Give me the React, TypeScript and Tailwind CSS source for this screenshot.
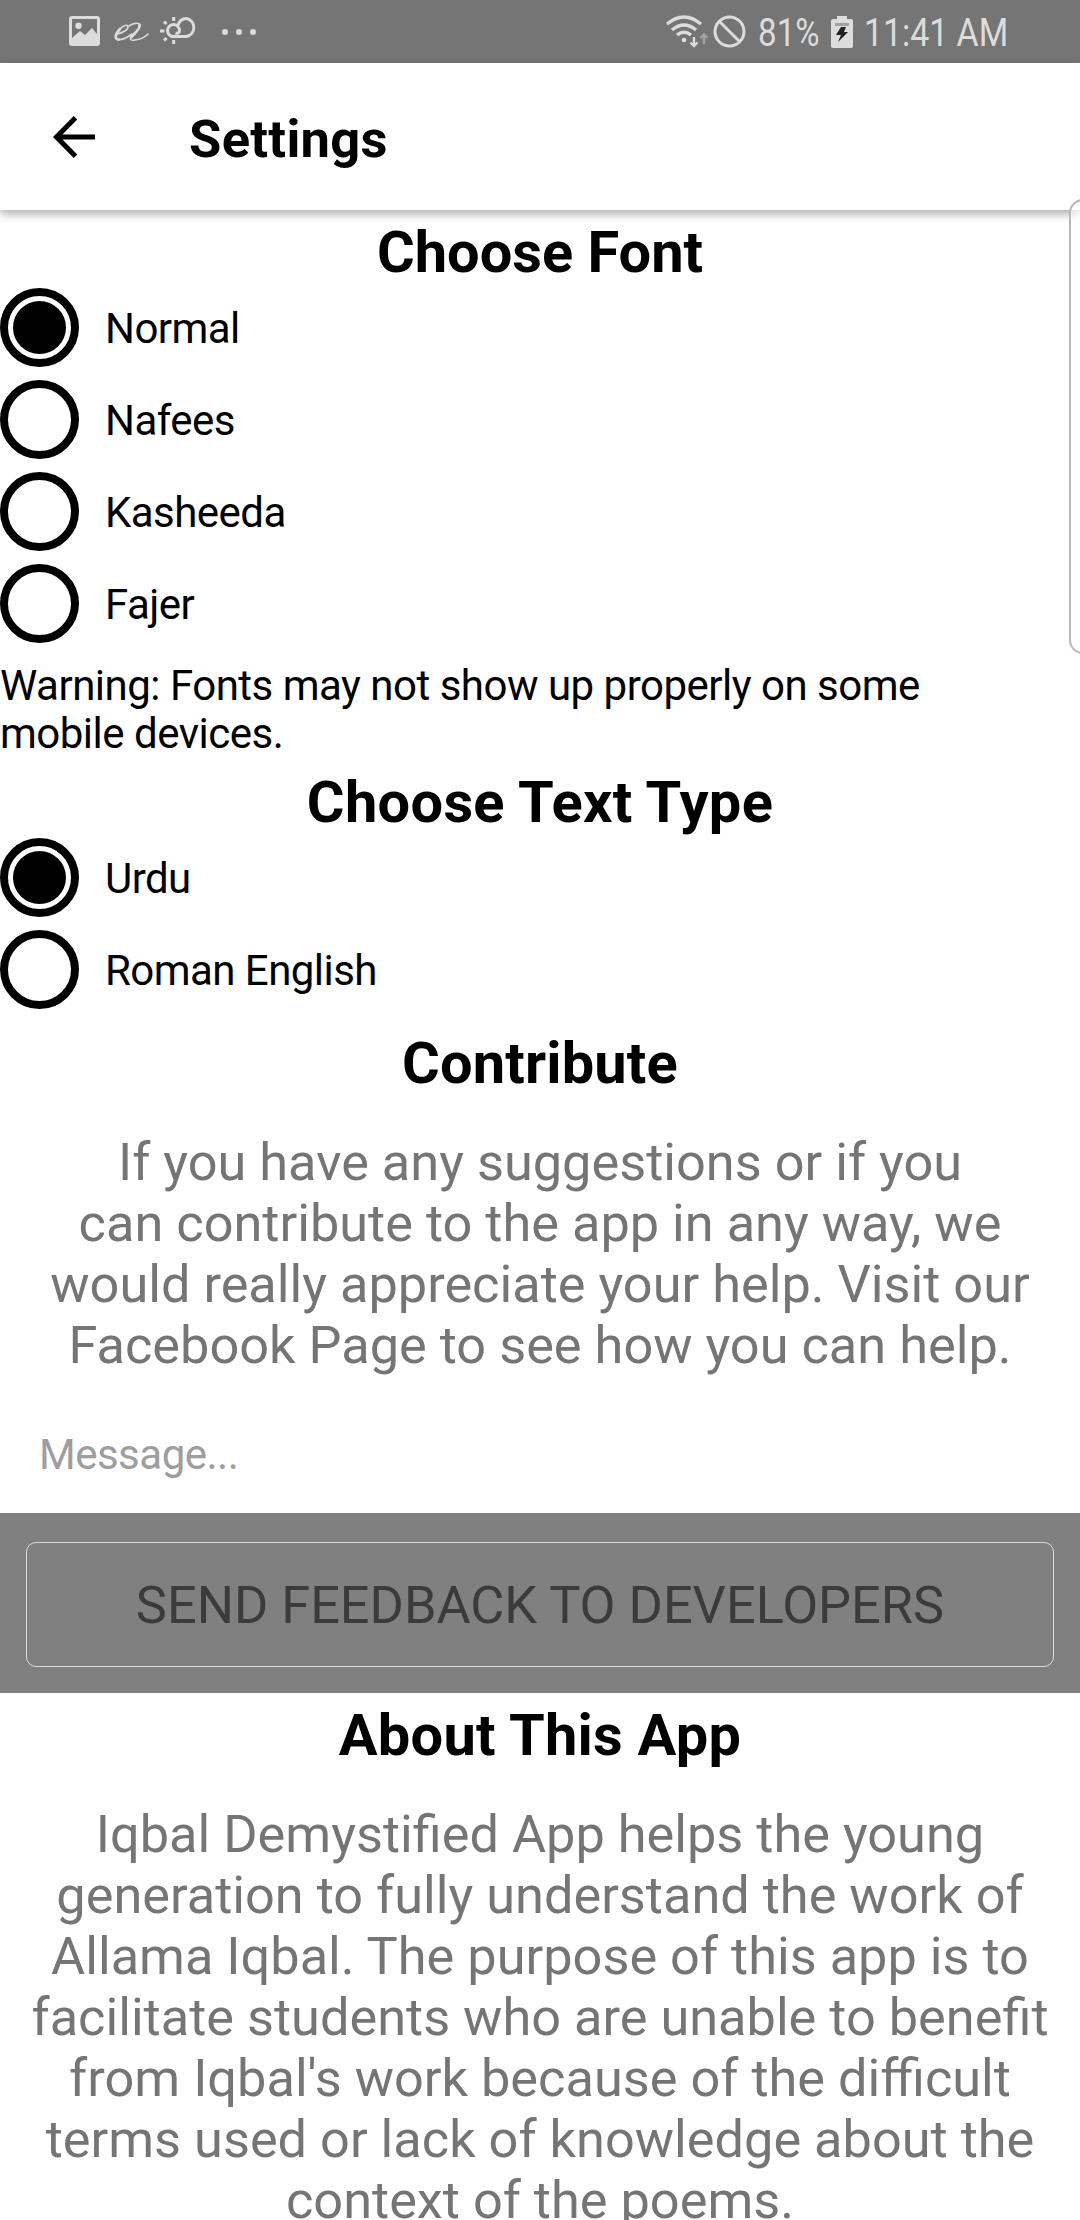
import type { ReactNode } from "react";

function StatusBar() {
  return (
    <div className="flex h-[63px] items-center bg-[#757575] text-[#dcdcdc]">
      <svg className="ml-[69px] h-[31px] w-[31px] shrink-0" viewBox="0 0 31 31">
        <path fill="currentColor" fillRule="evenodd" d="M3 0H28Q31 0 31 3V27Q31 30 28 30H3Q0 30 0 27V3Q0 0 3 0ZM3 3V22L11 15L16 19L23 12L28 18V3ZM9.500 6.500A3.200 3.200 0 1 1 9.500 12.900A3.200 3.200 0 1 1 9.500 6.500Z" />
      </svg>
      <svg className="ml-[14px] h-[20px] w-[36px] shrink-0" viewBox="0 0 36 20" fill="none" stroke="currentColor" strokeLinecap="round">
        <path strokeWidth="1.600" d="M3 12C8 11 14 8 14 5C14 2 9 3 5 8" />
        <path strokeWidth="2.600" d="M6 7C1 12 0 17.500 5 17.500" />
        <path strokeWidth="1.600" d="M4 17.800C9 18 14 15 18 12M15 4C19 1 24 0.500 26 2.500" />
        <path strokeWidth="2.800" d="M25.500 3C27 6 20 12 17.500 15" />
        <path strokeWidth="1.600" d="M17 15.500C15 18 18 18.500 21 18C26 17.500 31 15 34 12" />
      </svg>
      <svg className="ml-[10px] h-[30px] w-[37px] shrink-0" viewBox="0 0 37 30" fill="none" stroke="currentColor" strokeWidth="3">
        <path d="M17.500 9.500C19 4 22.500 1.500 26.500 1.500A9.200 9.200 0 0 1 26.500 19.500H14A6 6 0 1 1 19.500 13.500C19.500 15.500 18 17 15.500 16" />
        <path d="M13.700 0V4M4 4.500L6.500 7M0 14H4.500M4 23.500L6.500 21M13.700 23V27" />
      </svg>
      <div className="ml-[25px] flex gap-2">
        <i className="size-1.5 rounded-full bg-current" />
        <i className="size-1.5 rounded-full bg-current" />
        <i className="size-1.5 rounded-full bg-current" />
      </div>
      <div className="grow" />
      <svg className="h-[34px] w-[43px] shrink-0" viewBox="0 0 43 34" fill="none" stroke="currentColor" strokeWidth="3.200">
        <path d="M1 9Q18-5 35 9M6 15Q18 5 30 15M11 20Q18 14.500 25 20" />
        <circle cx="18" cy="25" r="2.300" fill="currentColor" stroke="none" />
        <path strokeWidth="2.400" d="M28 22V31M24.500 27.500L28 31L31.500 27.500" />
        <path className="text-[#a2a2a2]" strokeWidth="2.400" d="M38 29V20M34.500 23L38 19.500L41.500 23" />
      </svg>
      <svg className="ml-[4px] h-[33px] w-[33px] shrink-0" viewBox="0 0 33 33" fill="none" stroke="currentColor" strokeWidth="3">
        <circle cx="16.500" cy="16.500" r="14.500" />
        <path d="M6.500 6.500L26.500 26.500" />
      </svg>
      <span className="ml-[12px] w-[61px] origin-left scale-x-[0.85] pt-[2px] text-[39px] leading-[46px] whitespace-nowrap">81%</span>
      <svg className="ml-[12px] h-[32px] w-[22px] shrink-0" viewBox="0 0 22 32">
        <path fill="currentColor" d="M6 0H16V3H20Q22 3 22 5V30Q22 32 20 32H2Q0 32 0 30V5Q0 3 2 3H6Z" />
        <path fill="#a0a0a0" d="M4 7H18V10H4Z" />
        <path fill="#222" d="M10 11H15L13 16H17L7 26L10 19H5Z" />
      </svg>
      <span className="mr-[72px] ml-[11px] w-[144px] origin-left scale-x-[0.867] pt-[2px] text-[39px] leading-[46px] whitespace-nowrap">11:41 AM</span>
    </div>
  );
}

function Header() {
  return (
    <header className="relative flex h-[147px] items-center bg-white shadow-[0_4px_9px_rgba(0,0,0,0.32)]">
      <svg className="ml-[53px] h-[42px] w-[42px]" viewBox="0 0 42 42" fill="none" stroke="#000" strokeWidth="5">
        <path d="M42 21H3.500M22.500 1.800L3.500 21L22.500 40.200" />
      </svg>
      <h1 className="ml-[94px] pt-1 text-[52.500px] leading-[62px] font-bold tracking-[0.3px]">Settings</h1>
    </header>
  );
}

function Heading({ children, spacing = "" }: { children: ReactNode; spacing?: string }) {
  return <h2 className={`text-center text-[57.750px] leading-[68px] font-bold ${spacing}`}>{children}</h2>;
}

function Radio({ label, selected = false }: { label: string; selected?: boolean }) {
  return (
    <label className="flex h-[92px] items-start">
      <span className="flex size-[79px] items-center justify-center rounded-full border-8 border-black">
        {selected && <span className="size-[53px] rounded-full bg-black" />}
      </span>
      <span className="ml-[26px] pt-[16px] text-[42px] leading-[50px] tracking-[-0.55px]">{label}</span>
    </label>
  );
}

function Line({ children }: { children: ReactNode }) {
  return <span className="block whitespace-nowrap">{children}</span>;
}

export default function App() {
  return (
    <div className="relative h-[2220px] w-[1080px] overflow-hidden bg-white font-[Roboto,sans-serif] text-black">
      <StatusBar />
      <Header />
      <section className="pt-[8px]">
        <Heading>Choose Font</Heading>
        <div className="pt-[2px]">
          <Radio label="Normal" selected />
          <Radio label="Nafees" />
          <Radio label="Kasheeda" />
          <Radio label="Fajer" />
        </div>
        <p className="pt-[6px] text-[42px] leading-[48px] tracking-[-0.5px]">
          <Line>Warning: Fonts may not show up properly on some</Line>
          <Line>mobile devices.</Line>
        </p>
      </section>
      <section className="pt-[10px]">
        <Heading spacing="tracking-[0.3px]">Choose Text Type</Heading>
        <div className="pt-[2px]">
          <Radio label="Urdu" selected />
          <Radio label="Roman English" />
        </div>
      </section>
      <section className="pt-[7px]">
        <Heading spacing="tracking-[0.15px]">Contribute</Heading>
        <p className="pt-[35px] text-center text-[52.300px] leading-[61px] text-[#757575]">
          <Line>If you have any suggestions or if you</Line>
          <Line>can contribute to the app in any way, we</Line>
          <Line>would really appreciate your help. Visit our</Line>
          <Line>Facebook Page to see how you can help.</Line>
        </p>
        <div className="pt-[54px] pl-[39px] text-[42px] leading-[50px] tracking-[-0.5px] text-[#9e9e9e]">Message...</div>
      </section>
      <div className="mt-[33px] flex h-[180px] bg-[#808080] px-[26px] pt-[29px]">
        <button className="h-[125px] w-full rounded-[10px] border border-[#dadada] text-[52.300px] leading-[62px] whitespace-nowrap text-[#3b3b3b]">
          SEND FEEDBACK TO DEVELOPERS
        </button>
      </div>
      <section className="pt-[8px]">
        <Heading spacing="tracking-[0.25px]">About This App</Heading>
        <p className="pt-[35px] text-center text-[52.300px] leading-[61px] text-[#757575]">
          <Line>Iqbal Demystified App helps the young</Line>
          <Line>generation to fully understand the work of</Line>
          <Line>Allama Iqbal. The purpose of this app is to</Line>
          <Line>facilitate students who are unable to benefit</Line>
          <Line>from Iqbal's work because of the difficult</Line>
          <Line>terms used or lack of knowledge about the</Line>
          <Line>context of the poems.</Line>
        </p>
      </section>
      <div className="absolute top-[199px] -right-[20px] h-[455px] w-[31px] rounded-[14px] border-2 border-[#b9b9b9] bg-white/60" />
    </div>
  );
}
